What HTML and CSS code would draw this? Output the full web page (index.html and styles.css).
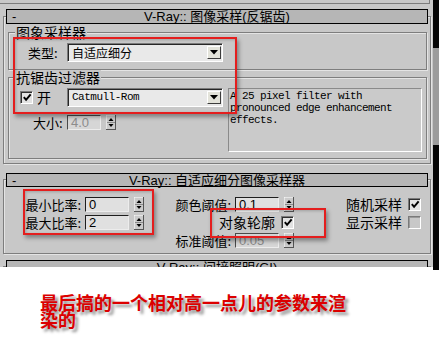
FILE: index.html
```html
<!DOCTYPE html>
<html lang="zh">
<head>
<meta charset="utf-8">
<title>V-Ray 图像采样</title>
<link rel="stylesheet" href="styles.css">
</head>
<body>
<div class="screen">
  <div class="ui">
    <div class="panel">
      <div class="prev"></div>

      <section class="rollout r1">
        <div class="rh"><span class="rh-minus">-</span><span class="rh-title">V-Ray:: 图像采样(反锯齿)</span><span></span></div>

        <div class="group g1">
          <div class="glabel">图象采样器</div>
          <div class="row type-row">
            <span class="lbl type-lbl">类型:</span>
            <div class="combo">
              <span class="combo-text">自适应细分</span>
              <span class="combo-btn"><svg width="8" height="5" viewBox="0 0 8 5"><polygon points="0,0 8,0 4,4.5" fill="#000"/></svg></span>
            </div>
          </div>
        </div>

        <div class="group g2">
          <div class="glabel">抗锯齿过滤器</div>
          <div class="g2-body">
            <div class="g2-left">
              <div class="row on-row">
                <span class="check"><svg width="11" height="11" viewBox="0 0 11 11"><path d="M2 5 L4.5 8 L9.5 2" fill="none" stroke="#000" stroke-width="2.2"/></svg></span>
                <span class="on-lbl">开</span>
                <div class="combo">
                  <span class="combo-text mono">Catmull-Rom</span>
                  <span class="combo-btn"><svg width="8" height="5" viewBox="0 0 8 5"><polygon points="0,0 8,0 4,4.5" fill="#000"/></svg></span>
                </div>
              </div>
              <div class="row size-row">
                <span class="lbl size-lbl">大小:</span>
                <span class="field small disabled">4.0</span>
                <span class="spin"><svg width="10" height="15" viewBox="0 0 10 15"><rect x="0" y="0" width="10" height="15" fill="#cbcbcb"/><path d="M0 0 H10 M0 0 V15" stroke="#fff" stroke-width="1"/><path d="M0 14.5 H10 M9.5 0 V15" stroke="#555" stroke-width="1"/><path d="M1 7.5 H9" stroke="#8a8a8a" stroke-width="1"/><polygon points="2.5,6 7.5,6 5,3" fill="#000"/><polygon points="2.5,9 7.5,9 5,12" fill="#000"/></svg></span>
              </div>
            </div>
            <div class="desc">A 25 pixel filter with pronounced edge enhancement effects.</div>
          </div>
        </div>
      </section>

      <section class="rollout r2">
        <div class="rh"><span class="rh-minus">-</span><span class="rh-title">V-Ray:: 自适应细分图像采样器</span><span></span></div>
        <div class="grid">
          <div class="cell">
            <span class="lbl">最小比率:</span>
            <span class="field">0</span>
            <span class="spin"><svg width="10" height="15" viewBox="0 0 10 15"><rect x="0" y="0" width="10" height="15" fill="#cbcbcb"/><path d="M0 0 H10 M0 0 V15" stroke="#fff" stroke-width="1"/><path d="M0 14.5 H10 M9.5 0 V15" stroke="#555" stroke-width="1"/><path d="M1 7.5 H9" stroke="#8a8a8a" stroke-width="1"/><polygon points="2.5,6 7.5,6 5,3" fill="#000"/><polygon points="2.5,9 7.5,9 5,12" fill="#000"/></svg></span>
          </div>
          <div class="cell">
            <span class="lbl">颜色阈值:</span>
            <span class="field">0.1</span>
            <span class="spin"><svg width="10" height="15" viewBox="0 0 10 15"><rect x="0" y="0" width="10" height="15" fill="#cbcbcb"/><path d="M0 0 H10 M0 0 V15" stroke="#fff" stroke-width="1"/><path d="M0 14.5 H10 M9.5 0 V15" stroke="#555" stroke-width="1"/><path d="M1 7.5 H9" stroke="#8a8a8a" stroke-width="1"/><polygon points="2.5,6 7.5,6 5,3" fill="#000"/><polygon points="2.5,9 7.5,9 5,12" fill="#000"/></svg></span>
          </div>
          <div class="cell">
            <span class="lbl big">随机采样</span>
            <span class="check"><svg width="11" height="11" viewBox="0 0 11 11"><path d="M2 5 L4.5 8 L9.5 2" fill="none" stroke="#000" stroke-width="2.2"/></svg></span>
          </div>

          <div class="cell">
            <span class="lbl">最大比率:</span>
            <span class="field">2</span>
            <span class="spin"><svg width="10" height="15" viewBox="0 0 10 15"><rect x="0" y="0" width="10" height="15" fill="#cbcbcb"/><path d="M0 0 H10 M0 0 V15" stroke="#fff" stroke-width="1"/><path d="M0 14.5 H10 M9.5 0 V15" stroke="#555" stroke-width="1"/><path d="M1 7.5 H9" stroke="#8a8a8a" stroke-width="1"/><polygon points="2.5,6 7.5,6 5,3" fill="#000"/><polygon points="2.5,9 7.5,9 5,12" fill="#000"/></svg></span>
          </div>
          <div class="cell">
            <span class="lbl big">对象轮廓</span>
            <span class="check"><svg width="11" height="11" viewBox="0 0 11 11"><path d="M2 5 L4.5 8 L9.5 2" fill="none" stroke="#000" stroke-width="2.2"/></svg></span>
          </div>
          <div class="cell">
            <span class="lbl big">显示采样</span>
            <span class="check empty"></span>
          </div>

          <div class="cell"></div>
          <div class="cell">
            <span class="lbl">标准阈值:</span>
            <span class="field disabled">0.05</span>
            <span class="spin"><svg width="10" height="15" viewBox="0 0 10 15"><rect x="0" y="0" width="10" height="15" fill="#cbcbcb"/><path d="M0 0 H10 M0 0 V15" stroke="#fff" stroke-width="1"/><path d="M0 14.5 H10 M9.5 0 V15" stroke="#555" stroke-width="1"/><path d="M1 7.5 H9" stroke="#8a8a8a" stroke-width="1"/><polygon points="2.5,6 7.5,6 5,3" fill="#000"/><polygon points="2.5,9 7.5,9 5,12" fill="#000"/></svg></span>
          </div>
          <div class="cell"></div>
        </div>
      </section>

      <section class="rollout r3">
        <div class="rh"><span class="rh-minus">-</span><span class="rh-title">V-Ray:: 间接照明(GI)</span><span></span></div>
      </section>
    </div>
    <div class="scroll"><div class="thumb"></div></div>

    <div class="mark m1"></div>
    <div class="mark m2"></div>
    <div class="mark m3"></div>
  </div>

  <div class="note">最后搞的一个相对高一点儿的参数来渲染的</div>
</div>
</body>
</html>
```

FILE: styles.css
```css
html, body {
  margin: 0;
  padding: 0;
  background: #fff;
}

body {
  font-family: "Noto Sans CJK SC", "Liberation Sans", sans-serif;
  color: #000;
}

.screen {
  width: 439px;
  height: 357px;
  overflow: hidden;
}

.ui {
  position: relative;
  display: flex;
  height: 267px;
  background: #c8c8c8;
}

.panel {
  width: 433px;
  height: 267px;
  overflow: hidden;
}

.scroll {
  width: 6px;
  height: 270px;
  background: #050505;
  padding-top: 48px;
  box-sizing: border-box;
}

.thumb {
  height: 97px;
  background: #9c9c9c;
}

.prev {
  width: 429px;
  height: 3px;
  border-bottom: 1px solid #7c7c7c;
  border-right: 1px solid #7c7c7c;
}

/* rollouts */
.rollout {
  width: 428px;
  margin-left: 3px;
  box-sizing: border-box;
  border: 1px solid #7e7e7e;
  box-shadow: inset 1px 1px 0 #e4e4e4, 1px 1px 0 #e4e4e4;
}

.r1 {
  margin-top: 12px;
}

.r2 {
  margin-top: 15px;
}

.r3 {
  margin-top: 12px;
  height: 20px;
}

.rh {
  display: grid;
  grid-template-columns: 1fr auto 1fr;
  align-items: center;
  margin: -8px 2px 0;
  height: 15px;
  box-sizing: border-box;
  border: 1px solid #000;
  background: #b6b6b6;
  font: 13px/13px "Liberation Sans", "Noto Sans CJK SC", sans-serif;
  position: relative;
}

.r2 .rh,
.r3 .rh {
  margin-top: -7px;
  height: 14px;
}

.rh-minus {
  padding-left: 5px;
}

.rh-title {
  white-space: nowrap;
}

/* groups */
.group {
  border: 1px solid #7e7e7e;
  box-shadow: inset 1px 1px 0 #e4e4e4, 1px 1px 0 #e4e4e4;
  margin: 0 3px 0 4px;
  padding-bottom: 7px;
}

.g1 {
  margin-top: 8px;
}

.g2 {
  margin-top: 7px;
  margin-bottom: 4px;
  padding-bottom: 6px;
}

.glabel {
  width: max-content;
  margin: -8px 0 0 6px;
  padding: 0 1px;
  background: #c8c8c8;
  font-size: 14px;
  line-height: 14px;
}

.row {
  display: flex;
  align-items: center;
}

.lbl {
  font-size: 13px;
  line-height: 15px;
  white-space: nowrap;
}

.lbl.big {
  font-size: 14px;
}

.type-row {
  margin-top: 4px;
}

.type-lbl {
  width: 39px;
  margin-left: 19px;
}

/* combo box */
.combo {
  display: flex;
  align-items: center;
  justify-content: space-between;
  width: 156px;
  height: 19px;
  box-sizing: border-box;
  border: 1px solid;
  border-color: #7a7a7a #fff #fff #7a7a7a;
  box-shadow: inset 1px 1px 0 #262626;
  background: #e9e9e9;
  padding: 0 1px 0 4px;
}

.combo-text {
  font-size: 12px;
  line-height: 14px;
}

.combo-text.mono {
  font: 11px/14px "Liberation Mono", monospace;
  letter-spacing: -0.5px;
}

.combo-btn {
  display: flex;
  align-items: center;
  justify-content: center;
  width: 14px;
  height: 13px;
  box-sizing: border-box;
  border: 1px solid;
  border-color: #fff #3c3c3c #3c3c3c #fff;
  background: #e3e3da;
}

/* group 2 */
.g2-body {
  display: flex;
  margin-top: 4px;
}

.g2-left {
  width: 219px;
}

.on-row {
  height: 18px;
}

.check {
  display: flex;
  align-items: center;
  justify-content: center;
  width: 13px;
  height: 13px;
  box-sizing: border-box;
  border: 1px solid;
  border-color: #7a7a7a #fff #fff #7a7a7a;
  box-shadow: inset 1px 1px 0 #303030;
  background: #e2e2e2;
  padding: 1px 0 0 1px;
}

.check.empty {
  background: #c8c8c8;
  box-shadow: inset 1px 1px 0 #9a9a9a;
}

.on-row .check {
  margin-left: 11px;
}

.on-lbl {
  width: 30px;
  margin-left: 4px;
  font-size: 14px;
  line-height: 15px;
}

.size-row {
  margin-top: 9px;
}

.size-lbl {
  width: 34px;
  margin-left: 24px;
}

.field {
  width: 44px;
  height: 15px;
  box-sizing: border-box;
  border: 1px solid;
  border-color: #1e1e1e #ececec #ececec #1e1e1e;
  background: #e0e0e0;
  padding-left: 3px;
  font: 13px/13px "Liberation Sans", sans-serif;
}

.field.small {
  width: 34px;
}

.field.disabled {
  color: #8c8c8c;
  background: #d6d6d6;
  border-color: #4a4a4a #ececec #ececec #4a4a4a;
}

.spin {
  display: flex;
  margin-left: 5px;
}

.desc {
  width: 194px;
  height: 64px;
  box-sizing: border-box;
  border: 1px solid;
  border-color: #8a8a8a #fff #fff #8a8a8a;
  background: #cacaca;
  padding: 1px 2px 0 1px;
  font: 11px/12px "Liberation Mono", monospace;
  letter-spacing: -0.6px;
}

/* rollout 2 grid */
.grid {
  display: grid;
  grid-template-columns: 140px 150px 127px;
  grid-auto-rows: 18px;
  justify-items: end;
  align-items: center;
  padding: 8px 0 4px;
}

.cell {
  display: flex;
  align-items: center;
}

.cell .lbl {
  margin-right: 4px;
}

.cell .lbl.big {
  margin-right: 6px;
}

/* red annotation marks */
.mark {
  position: absolute;
  box-sizing: border-box;
  border: 2px solid #e41e1e;
  box-shadow: 2px 3px 4px rgba(0, 0, 0, 0.35), inset 1px 1px 3px rgba(0, 0, 0, 0.2);
}

.m1 {
  left: 13px;
  top: 37px;
  width: 224px;
  height: 77px;
}

.m2 {
  left: 23px;
  top: 189px;
  width: 131px;
  height: 46px;
}

.m3 {
  left: 210px;
  top: 208px;
  width: 116px;
  height: 30px;
}

/* note */
.note {
  width: 320px;
  padding: 27px 0 0 40px;
  font: bold 18px/17px "Noto Sans CJK SC", sans-serif;
  color: #dc0000;
  text-shadow: 3px 3px 3px rgba(0, 0, 0, 0.45);
}
```
